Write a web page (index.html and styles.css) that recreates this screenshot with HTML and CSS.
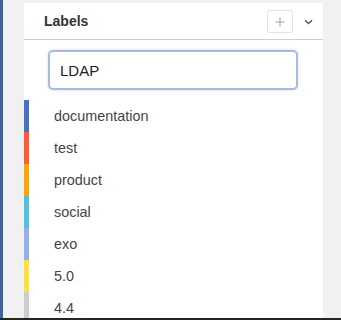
FILE: index.html
```html
<!DOCTYPE html>
<html lang="en">
<head>
    <meta charset="UTF-8">
    <meta name="viewport" content="width=device-width, initial-scale=1.0">
    <title>Labels</title>
    <link rel="stylesheet" href="styles.css">
</head>
<body>
    <div class="page">
        <div class="main">
            <div class="sidebar"></div>
            <div class="panel">
                <div class="panel-header">
                    <span class="panel-title">Labels</span>
                    <div class="add-button">
                        <svg width="10" height="10" viewBox="0 0 10 10"><path d="M5 0.5V9.5M0.5 5H9.5" stroke="#8fa3c4" stroke-width="1" fill="none"/></svg>
                    </div>
                    <div class="toggle">
                        <svg width="9" height="6" viewBox="0 0 9 6"><path d="M1 1.2L4.5 4.5L8 1.2" stroke="#555" stroke-width="1.4" fill="none"/></svg>
                    </div>
                </div>
                <div class="search">
                    <input type="text" class="search-input" value="LDAP">
                </div>
                <ul class="labels">
                    <li class="label" style="border-left-color: #4670c8;">documentation</li>
                    <li class="label" style="border-left-color: #ff5a36;">test</li>
                    <li class="label" style="border-left-color: #ffa500;">product</li>
                    <li class="label" style="border-left-color: #4fc1dd;">social</li>
                    <li class="label" style="border-left-color: #8fb0e8;">exo</li>
                    <li class="label" style="border-left-color: #ffe03d;">5.0</li>
                    <li class="label" style="border-left-color: #cccccc;">4.4</li>
                </ul>
            </div>
        </div>
        <div class="footer"></div>
    </div>
</body>
</html>
```

FILE: styles.css
```css
body {
    margin: 0;
    font-family: "Liberation Sans", Arial, sans-serif;
    background-color: #f1f1f1;
}
.page {
    height: 320px;
    overflow: hidden;
    display: flex;
    flex-direction: column;
}
.main {
    height: 318px;
    display: flex;
    overflow: hidden;
}
.sidebar {
    width: 3px;
    background-color: #3f639b;
    margin-right: 21px;
}
.panel {
    width: 299px;
    margin-top: 3px;
    background-color: white;
}
.panel-header {
    height: 36px;
    display: flex;
    align-items: center;
    padding: 0 10px 0 20px;
    border-bottom: 1px solid #cfcfcf;
}
.panel-title {
    flex: 1;
    font-size: 14px;
    font-weight: bold;
    color: #333;
}
.add-button {
    width: 24px;
    height: 21px;
    border: 1px solid #dde3ea;
    border-radius: 3px;
    display: flex;
    justify-content: center;
    align-items: center;
    margin-top: 1px;
}
.toggle {
    width: 10px;
    display: flex;
    justify-content: center;
    margin-left: 10px;
    margin-top: 1px;
}
.search {
    padding: 10px 0 10px 24px;
}
.search-input {
    width: 250px;
    height: 40px;
    box-sizing: border-box;
    border: 2px solid #a8bbdb;
    border-radius: 5px;
    box-shadow: 0 0 3px rgba(120, 150, 200, 0.35);
    padding: 0 10px;
    font-family: "Liberation Sans", Arial, sans-serif;
    font-size: 15px;
    color: #222;
    outline: none;
}
.labels {
    list-style: none;
    margin: 0;
    padding: 0;
}
.label {
    height: 32px;
    line-height: 32px;
    border-left: 5px solid transparent;
    padding-left: 25px;
    font-size: 14.4px;
    color: #444;
}
.footer {
    height: 2px;
    background-color: #2a2420;
}
```
